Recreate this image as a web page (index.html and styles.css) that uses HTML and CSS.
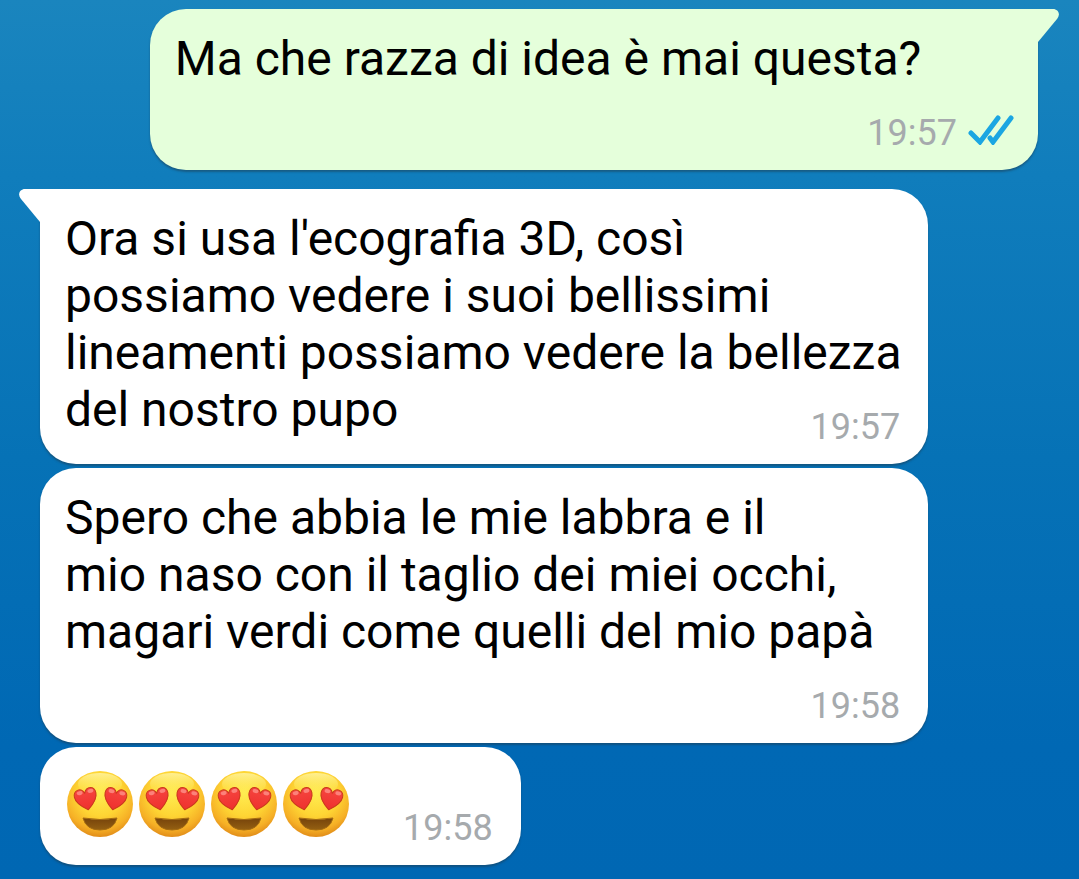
FILE: index.html
```
<!DOCTYPE html>
<html lang="it">

<head>
  <meta charset="UTF-8">
  <meta name="viewport" content="width=device-width, initial-scale=1.0">
  <title>Chat</title>
  <link rel="stylesheet" href="styles.css">
</head>

<body>

  <!-- Shared emoji drawing -->
  <svg class="defs" width="0" height="0" aria-hidden="true">
    <defs>
      <radialGradient id="face" cx="50%" cy="34%" r="68%">
        <stop offset="0" stop-color="#ffec50" />
        <stop offset="0.5" stop-color="#fed534" />
        <stop offset="0.8" stop-color="#f6b026" />
        <stop offset="1" stop-color="#de8717" />
      </radialGradient>
      <linearGradient id="shine" x1="0" y1="0" x2="0" y2="1">
        <stop offset="0" stop-color="#fff9b8" stop-opacity="0.7" />
        <stop offset="1" stop-color="#fff261" stop-opacity="0" />
      </linearGradient>
      <linearGradient id="heart-fill" x1="0" y1="0" x2="0" y2="1">
        <stop offset="0" stop-color="#f6453f" />
        <stop offset="1" stop-color="#ee302e" />
      </linearGradient>
      <linearGradient id="mouth" x1="0" y1="0" x2="0" y2="1">
        <stop offset="0" stop-color="#76430b" />
        <stop offset="1" stop-color="#946012" />
      </linearGradient>
      <g id="heart">
        <path d="M0 11 C-4 8 -11 3 -11 -4 C-11 -11 -3 -13 0 -6 C3 -13 11 -11 11 -4 C11 3 4 8 0 11 Z" fill="url(#heart-fill)" stroke="#c93a1c" stroke-width="1" />
        <ellipse cx="-5" cy="-7" rx="3" ry="2" fill="#ff9d94" opacity="0.7" />
        <ellipse cx="6" cy="-7" rx="3" ry="2" fill="#ff9d94" opacity="0.7" />
      </g>
      <symbol id="heart-eyes" viewBox="0 0 72 72">
        <circle cx="35" cy="36" r="33" fill="url(#face)" />
        <ellipse cx="35" cy="16" rx="22" ry="11" fill="url(#shine)" />
        <use href="#heart" transform="translate(21 31) rotate(-12)" />
        <use href="#heart" transform="translate(50 31) rotate(12)" />
        <path d="M18 50 Q35 53 52 50 Q49 62 35 62 Q21 62 18 50 Z" fill="url(#mouth)" stroke="#a36a12" stroke-width="1" stroke-linejoin="round" />
      </symbol>
    </defs>
  </svg>

  <main class="chat">
    <article class="bubble sent">
      <svg class="tail" viewBox="0 0 23 34" aria-hidden="true">
        <path d="M0 0 H16 C21 0 24 5 20 10 L1 33 H0 Z" />
      </svg>
      <p class="text">Ma che razza di idea è mai questa?</p>
      <div class="meta">
        <time>19:57</time>
        <svg class="checks" viewBox="0 0 46 30" role="img" aria-label="Letto">
          <path d="M3 18 L12 27 L30 3" />
          <path d="M22 23 L25 27 L43 3" />
        </svg>
      </div>
    </article>

    <article class="bubble received first">
      <svg class="tail" viewBox="0 0 23 34" aria-hidden="true">
        <path d="M23 0 H7 C2 0 -1 5 3 10 L22 33 H23 Z" />
      </svg>
      <p class="text">Ora si usa l'ecografia 3D, così<br>possiamo vedere i suoi bellissimi<br>lineamenti possiamo vedere la bellezza<br>del nostro pupo</p>
      <div class="meta beside">
        <time>19:57</time>
      </div>
    </article>

    <article class="bubble received">
      <p class="text">Spero che abbia le mie labbra e il<br>mio naso con il taglio dei miei occhi,<br>magari verdi come quelli del mio papà</p>
      <div class="meta">
        <time>19:58</time>
      </div>
    </article>

    <article class="bubble received short">
      <div class="emojis" role="img" aria-label="Quattro faccine con occhi a cuore">
        <svg class="emoji"><use href="#heart-eyes" /></svg>
        <svg class="emoji"><use href="#heart-eyes" /></svg>
        <svg class="emoji"><use href="#heart-eyes" /></svg>
        <svg class="emoji"><use href="#heart-eyes" /></svg>
      </div>
      <div class="meta">
        <time>19:58</time>
      </div>
    </article>
  </main>

</body>

</html>
```
FILE: styles.css
```
/* Reset styles */
* {
  margin: 0;
  padding: 0;
  box-sizing: border-box;
}

body {
  min-height: 100vh;
  background: linear-gradient(#1a85be 0%, #107dbc 20%, #0672b6 52%, #0068b4 85%, #0067b3 100%);
  font-family: Roboto, "Liberation Sans", sans-serif;
  color: #000;
}

.defs {
  position: absolute;
}

/* Message list */
.chat {
  display: flex;
  flex-direction: column;
  align-items: flex-start;
  gap: 4px;
  padding: 9px 41px 13px 40px;
}

/* Bubbles */
.bubble {
  position: relative;
  width: 89%;
  padding: 21px 28px 16px 25px;
  border-radius: 36px;
  background: #fff;
  box-shadow: 0 2px 2px rgba(30, 60, 80, 0.5);
}

.sent {
  align-self: flex-end;
  margin-bottom: 15px;
  border-top-right-radius: 0;
  background: #e5ffdb;
}

.first {
  border-top-left-radius: 0;
}

.text {
  margin-right: -12px;
  font-size: 48px;
  line-height: 57px;
}

/* Tail at the top corner */
.tail {
  position: absolute;
  top: 0;
  width: 23px;
  height: 34px;
  fill: #fff;
}

.sent .tail {
  left: calc(100% - 1px);
  fill: #e5ffdb;
}

.received .tail {
  right: calc(100% - 1px);
}

/* Time and read marks */
.meta {
  display: flex;
  justify-content: flex-end;
  align-items: center;
  gap: 11px;
  margin-top: 25px;
  font-size: 36px;
  line-height: 42px;
  color: #a6aaad;
}

.beside {
  margin-top: -32px;
}

.checks {
  width: 46px;
  height: 30px;
  margin-bottom: 6px;
  fill: none;
  stroke: #1ba6e2;
  stroke-width: 5;
  stroke-linecap: round;
  stroke-linejoin: miter;
}

.sent .meta {
  margin-right: -4px;
}

/* Emoji message */
.short {
  display: flex;
  justify-content: space-between;
  align-items: flex-end;
  gap: 50px;
  width: auto;
}

.emojis {
  display: flex;
  padding-bottom: 9px;
}

.emoji {
  width: 72px;
  height: 72px;
}
```
